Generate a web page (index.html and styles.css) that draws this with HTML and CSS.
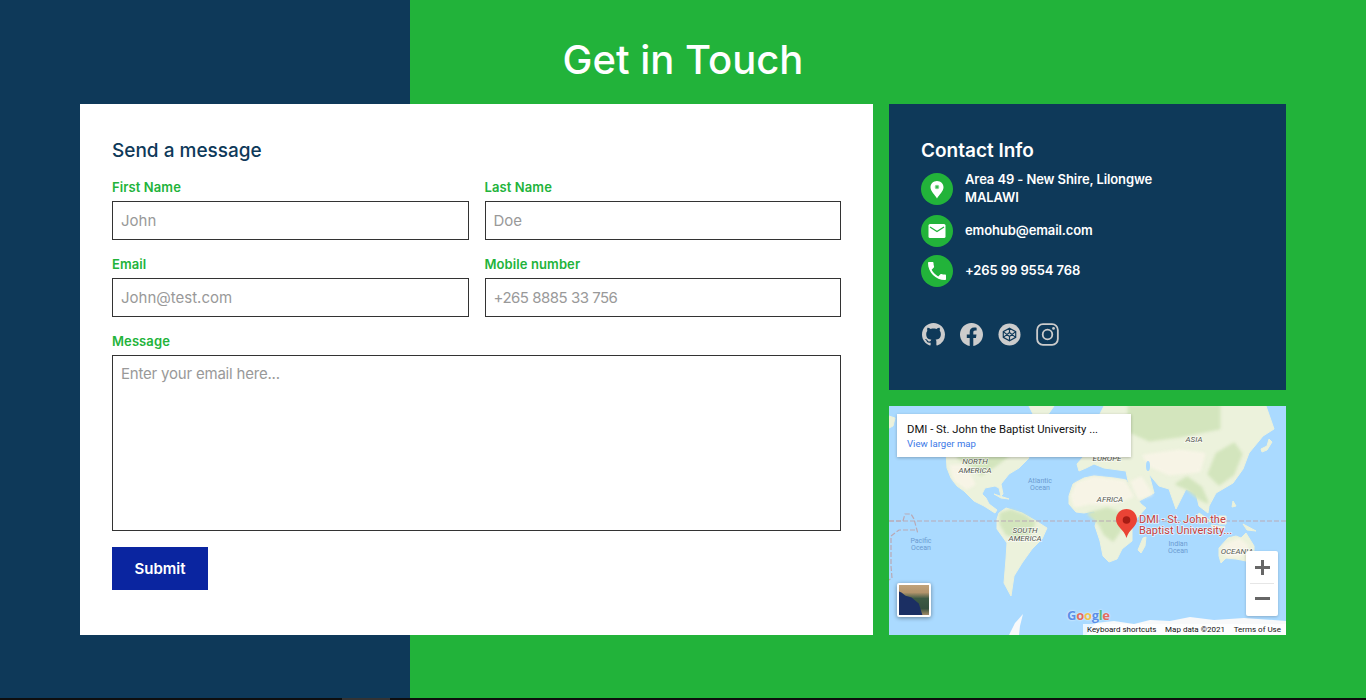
FILE: index.html
```html
<!DOCTYPE html>
<html lang="en">
<head>
    <meta charset="UTF-8">
    <meta name="viewport" content="width=device-width, initial-scale=1.0">
    <title>Get in Touch</title>
    <link rel="stylesheet" href="styles.css">
</head>
<body>
<div class="page">
    <h1 class="title">Get in Touch</h1>
    <div class="contact-grid">
        <form class="message-form">
            <h2>Send a message</h2>
            <div class="fields">
                <div class="field">
                    <label for="first">First Name</label>
                    <input type="text" id="first" placeholder="John">
                </div>
                <div class="field">
                    <label for="last">Last Name</label>
                    <input type="text" id="last" placeholder="Doe">
                </div>
                <div class="field">
                    <label for="email">Email</label>
                    <input type="text" id="email" placeholder="John@test.com">
                </div>
                <div class="field">
                    <label for="mobile">Mobile number</label>
                    <input type="text" id="mobile" class="tight" placeholder="+265 8885 33 756">
                </div>
                <div class="field wide">
                    <label for="msg">Message</label>
                    <textarea id="msg" placeholder="Enter your email here..."></textarea>
                </div>
            </div>
            <button type="button" class="submit">Submit</button>
        </form>

        <div class="side">
            <div class="info">
                <h3>Contact Info</h3>
                <div class="info-list">
                    <div class="info-item">
                        <span class="round">
                            <svg viewBox="0 0 24 24" width="24" height="24"><path fill="#fff" d="M12 4C8.300 4 5.500 6.800 5.500 10.300c0 3.900 4.300 7.500 6.500 11.200 2.200-3.700 6.500-7.300 6.500-11.200C18.500 6.800 15.700 4 12 4z"/><circle cx="12" cy="10" r="2.300" fill="#7fd48d"/><circle cx="12" cy="10" r="1" fill="#22b33a"/></svg>
                        </span>
                        <p>Area 49 - New Shire, Lilongwe<br>MALAWI</p>
                    </div>
                    <div class="info-item">
                        <span class="round">
                            <svg viewBox="0 0 24 24" width="24" height="24"><rect x="3.500" y="5" width="17" height="14" rx="1.500" fill="#fff"/><path d="M5 8l7 4.500L19 8" fill="none" stroke="#22b33a" stroke-width="1.300"/></svg>
                        </span>
                        <p>emohub@email.com</p>
                    </div>
                    <div class="info-item">
                        <span class="round">
                            <svg viewBox="0 0 24 24" width="24" height="24"><path fill="#fff" d="M6.620 10.790c1.440 2.830 3.760 5.140 6.590 6.590l2.200-2.200c.27-.27.67-.36 1.020-.24 1.120.37 2.330.57 3.570.57.55 0 1 .45 1 1V20c0 .55-.45 1-1 1-9.390 0-17-7.610-17-17 0-.55.45-1 1-1h3.500c.55 0 1 .45 1 1 0 1.250.2 2.450.57 3.570.11.35.03.74-.25 1.020l-2.200 2.200z"/></svg>
                        </span>
                        <p>+265 99 9554 768</p>
                    </div>
                </div>
                <div class="socials">
                    <svg viewBox="0 0 16 16" width="23" height="23"><path fill="#ccc" d="M8 0C3.580 0 0 3.580 0 8c0 3.540 2.290 6.530 5.470 7.590.4.07.55-.17.55-.38 0-.19-.01-.82-.01-1.490-2.010.37-2.530-.49-2.690-.94-.09-.23-.48-.94-.82-1.130-.28-.15-.68-.52-.01-.53.63-.01 1.080.58 1.230.82.72 1.210 1.870.87 2.330.66.07-.52.28-.87.51-1.070-1.780-.2-3.640-.89-3.640-3.950 0-.87.31-1.590.82-2.150-.08-.2-.36-1.020.08-2.120 0 0 .67-.21 2.200.82.64-.18 1.320-.27 2-.27.68 0 1.360.09 2 .27 1.530-1.040 2.200-.82 2.200-.82.44 1.100.16 1.920.08 2.120.51.56.82 1.270.82 2.150 0 3.070-1.870 3.750-3.650 3.950.29.25.54.73.54 1.480 0 1.070-.01 1.930-.01 2.200 0 .21.15.46.55.38A8.013 8.013 0 0 0 16 8c0-4.420-3.580-8-8-8z"/></svg>
                    <svg viewBox="0 0 16 16" width="23" height="23"><path fill="#ccc" d="M16 8.049c0-4.446-3.582-8.050-8-8.050C3.580 0-.002 3.603-.002 8.050c0 4.017 2.926 7.347 6.750 7.951v-5.625h-2.030V8.050H6.750V6.275c0-2.017 1.195-3.131 3.022-3.131.876 0 1.791.157 1.791.157v1.980h-1.009c-.993 0-1.303.621-1.303 1.258v1.510h2.218l-.354 2.326H9.250V16c3.824-.604 6.750-3.934 6.750-7.951z"/></svg>
                    <svg viewBox="0 0 24 24" width="23" height="23"><circle cx="12" cy="12" r="11.500" fill="#ccc"/><path d="M12 5.500l6.500 3.500v6L12 18.500 5.500 15V9zM12 5.500v4.500M12 18.500V14M5.500 9l6.500 5 6.500-5M5.500 15l6.500-5 6.500 5" fill="none" stroke="#0e3959" stroke-width="1.200"/></svg>
                    <svg viewBox="0 0 24 24" width="23" height="23"><rect x="1.200" y="1.200" width="21.600" height="21.600" rx="6" fill="none" stroke="#ccc" stroke-width="1.900"/><circle cx="12" cy="12" r="5" fill="none" stroke="#ccc" stroke-width="1.900"/><circle cx="18.300" cy="5.700" r="1.400" fill="#ccc"/></svg>
                </div>
            </div>

            <div class="map">
                <svg class="map-art" viewBox="0 0 397 229" width="397" height="229">
                    <g class="land">
                        <path d="M57 45L58 62 62 72 68 80 75 85 85 95 95 100 106 107 108 104 100 98 97 92 93 88 96 82 106 80 110 82 112 90 114 88 112 78 120 68 130 62 140 52 135 40 110 30 60 30z"/>
                        <path d="M110 107L117 102 133 107 147 115 158 122 153 133 143 143 133 157 125 170 122 190 115 177 117 153 118 137 108 123 108 113z"/>
                        <path d="M180 90L184 78 195 72 205 70 225 72 237 74 245 88 252 98 257 102 248 112 243 122 243 135 233 143 228 153 220 156 214 150 211 135 206 120 209 110 205 105 195 107 187 106 180 98z"/>
                        <path d="M215 0L377 0 385 23 374 30 360 47 354 63 344 77 327 87 320 100 319 107 310 100 307 87 297 83 287 103 280 83 270 80 260 68 265 87 250 95 240 80 237 65 215 62 205 58 197 62 190 65 188 58 195 50 195 30 210 10z"/>
                        <path d="M330 142L339 132 347 130 352 132 357 127 365 140 365 148 357 155 347 153 337 152 332 157 330 150z"/>
                        <path d="M254 132L257 131 256 140 252 147 249 144z"/>
                        <path d="M310 107L322 115 318 116 309 110zM330 110L337 110 337 118 330 118zM354 118L367 125 358 124zM322 119L336 121 324 122zM344 95L347 100 343 101z"/>
                        <path d="M380 33L383 36 378 44 373 46 372 43 378 40zM140 0L165 0 158 10 146 12zM105 88L120 93 112 92zM0 10L6 12 4 20 0 22z"/>
                    </g>
                    <g class="desert">
                        <path d="M183 90L188 78 205 72 235 76 243 90 225 97 200 97 186 100z"/>
                        <path d="M243 76L252 72 262 88 250 92z"/>
                        <path d="M255 50L290 45 315 48 310 65 280 68 262 60z"/>
                        <path d="M335 140L350 134 358 140 352 150 338 150z"/>
                        <path d="M62 60L75 60 85 78 78 82 66 74z"/>
                    </g>
                    <g class="forest">
                        <path d="M240 0H330L330 22 290 30 260 34 240 25z"/>
                        <path d="M112 108L122 105 135 110 145 117 140 128 128 130 118 128 112 118z"/>
                        <path d="M200 108L218 103 232 108 231 124 224 134 216 128 211 118z"/>
                        <path d="M62 30H125L118 50 105 60 92 68 85 60 70 52z"/>
                        <path d="M288 78L298 72 312 82 318 96 310 92 298 82zM328 48L345 38 352 48 344 68 330 78 320 68z"/>
                    </g>
                    <ellipse class="inland" cx="259" cy="60" rx="2" ry="5"/>
                    <g class="ice">
                        <path d="M120 229L126 217 134 208 131 220 130 229zM197 229L207 217 225 215 245 218 261 214 281 215 301 211 325 214 355 212 397 215V229z"/>
                    </g>
                    <path class="border-line" d="M0 115H397"/>
                    <path class="border-line" d="M0 115H14L16 108 22 108 25 113 29 128M26 124H10L2 130 2 160 3 172 0 174"/>
                    <g class="place">
                        <text x="86" y="58" text-anchor="middle">NORTH</text>
                        <text x="86" y="67" text-anchor="middle">AMERICA</text>
                        <text x="136" y="127" text-anchor="middle">SOUTH</text>
                        <text x="136" y="135" text-anchor="middle">AMERICA</text>
                        <text x="221" y="96" text-anchor="middle">AFRICA</text>
                        <text x="305" y="36" text-anchor="middle">ASIA</text>
                        <text x="218" y="55" text-anchor="middle">EUROPE</text>
                        <text x="348" y="148" text-anchor="middle">OCEANIA</text>
                    </g>
                    <g class="ocean">
                        <text x="151" y="77" text-anchor="middle">Atlantic</text>
                        <text x="151" y="84" text-anchor="middle">Ocean</text>
                        <text x="32" y="137" text-anchor="middle">Pacific</text>
                        <text x="32" y="144" text-anchor="middle">Ocean</text>
                        <text x="289" y="140" text-anchor="middle">Indian</text>
                        <text x="289" y="147" text-anchor="middle">Ocean</text>
                    </g>
                    <path fill="#ea4335" d="M237.500 103c-5.900 0-10.500 4.700-10.500 10.500 0 7.500 8 9.500 10.500 18.500 2.500-9 10.500-11 10.500-18.500 0-5.800-4.600-10.500-10.500-10.500z"/>
                    <circle cx="237.500" cy="114" r="3.800" fill="#a61c14"/>
                    <text class="pin-label" x="250" y="117">DMI - St. John the</text>
                    <text class="pin-label" x="250" y="128">Baptist University...</text>
                </svg>

                <div class="map-card">
                    <p class="map-name">DMI - St. John the Baptist University ...</p>
                    <a class="map-link" href="#">View larger map</a>
                </div>
                <div class="map-thumb"><span class="thumb-land"></span></div>
                <div class="map-zoom">
                    <span class="zoom-btn plus"></span>
                    <span class="zoom-btn minus"></span>
                </div>
                <div class="google"><span class="g-b">G</span><span class="g-r">o</span><span class="g-y">o</span><span class="g-b">g</span><span class="g-g">l</span><span class="g-r">e</span></div>
                <div class="map-foot">
                    <span>Keyboard shortcuts</span>
                    <span>Map data ©2021</span>
                    <span>Terms of Use</span>
                </div>
            </div>
        </div>
    </div>
</div>
<div class="bottom-strip"><span class="strip-tab"></span></div>
</body>
</html>
```

FILE: styles.css
```css
* {
    box-sizing: border-box;
}
body {
    margin: 0;
    font-family: "Inter", "Liberation Sans", sans-serif;
    background-color: #0e0e0e;
}
.page {
    height: 698px;
    padding: 0 80px;
    background: linear-gradient(90deg, #0e3959 410px, #22b33a 410px);
}
.title {
    margin: 0;
    height: 104px;
    padding-top: 15px;
    display: flex;
    align-items: center;
    justify-content: center;
    color: #fff;
    font-size: 40px;
    font-weight: 500;
}
.contact-grid {
    display: grid;
    grid-template-columns: 2fr 1fr;
    gap: 16px;
}

/* form */
.message-form {
    background-color: #fff;
    padding: 32px;
}
.message-form h2 {
    margin: 0 0 13px;
    padding-top: 1px;
    font-size: 19px;
    line-height: 27px;
    font-weight: 500;
    color: #0e3959;
}
.fields {
    display: grid;
    grid-template-columns: 1fr 1fr;
    gap: 14px 16px;
}
.field {
    display: flex;
    flex-direction: column;
    gap: 4px;
}
.wide {
    grid-column: 1 / 3;
}
.field label {
    font-size: 13px;
    line-height: 20px;
    font-weight: 600;
    letter-spacing: 0.1px;
    color: #22b33a;
}
.field input,
.field textarea {
    display: block;
    width: 100%;
    padding: 8px;
    border: 1px solid #333;
    border-radius: 0;
    font-family: inherit;
    font-size: 15px;
    outline: none;
    resize: none;
}
.field input {
    height: 39px;
}
.field input.tight {
    letter-spacing: -0.5px;
}
.field textarea {
    height: 176px;
    letter-spacing: -0.2px;
}
.field input::placeholder,
.field textarea::placeholder {
    color: #999;
}
.submit {
    display: block;
    width: 96px;
    height: 43px;
    margin-top: 16px;
    border: none;
    background-color: #0a25a0;
    color: #fff;
    font-family: inherit;
    font-size: 15px;
    font-weight: 600;
}

/* right column */
.side {
    display: flex;
    flex-direction: column;
    gap: 16px;
}
.info {
    height: 286px;
    padding: 32px;
    background-color: #0e3959;
    color: #fff;
}
.info h3 {
    margin: 0 0 6px;
    padding-top: 1px;
    font-size: 19px;
    line-height: 27px;
    font-weight: 600;
}
.info-list {
    display: flex;
    flex-direction: column;
    gap: 7px;
}
.info-item {
    display: flex;
    align-items: center;
    gap: 12px;
    font-size: 13px;
    font-weight: 600;
    line-height: 18px;
    letter-spacing: -0.1px;
}
.info-item p {
    margin: 0;
    padding-bottom: 1px;
}
.round {
    width: 32px;
    height: 32px;
    margin-top: 1px;
    flex-shrink: 0;
    display: flex;
    align-items: center;
    justify-content: center;
    border-radius: 50%;
    background-color: #22b33a;
}
.socials {
    display: flex;
    gap: 15px;
    margin-top: 36px;
    padding-left: 1px;
}

/* map */
.map {
    position: relative;
    height: 229px;
    overflow: hidden;
    background-color: #aadaff;
    font-family: "Roboto", sans-serif;
}
.map-art {
    display: block;
}
.land path {
    fill: #ecf2dc;
    stroke: #ecf2dc;
    stroke-width: 1;
    stroke-linejoin: round;
}
.desert path {
    fill: #f7f4e6;
    stroke: #f7f4e6;
    stroke-width: 3;
    stroke-linejoin: round;
    filter: blur(1.500px);
}
.forest path {
    fill: #d3e5bd;
    stroke: #d3e5bd;
    stroke-width: 3;
    stroke-linejoin: round;
    filter: blur(1.500px);
}
.inland {
    fill: #aadaff;
}
.ice path {
    fill: #f8f9fa;
}
.border-line {
    fill: none;
    stroke: #b9a9b5;
    stroke-width: 1.200;
    stroke-dasharray: 5 2;
}
.place text {
    font-size: 8px;
    font-style: italic;
    fill: #55584f;
    stroke: rgba(255,255,255,0.7);
    stroke-width: 1.500px;
    paint-order: stroke;
}
.ocean text {
    font-size: 7px;
    fill: #6a9bd1;
}
.pin-label {
    font-size: 11px;
    fill: #c5403c;
    stroke: rgba(255,255,255,0.7);
    stroke-width: 1.500px;
    paint-order: stroke;
}
.map-card {
    position: absolute;
    left: 8px;
    top: 8px;
    width: 234px;
    height: 43px;
    padding: 9px 10px;
    background-color: #fff;
    box-shadow: 0 1px 3px rgba(0,0,0,0.25);
}
.map-name {
    margin: 0;
    font-size: 11.300px;
    line-height: 14px;
    color: #111;
}
.map-link {
    display: block;
    font-size: 9.600px;
    line-height: 13px;
    color: #3b78e7;
    text-decoration: none;
}
.map-thumb {
    position: absolute;
    left: 8px;
    top: 177px;
    width: 34px;
    height: 34px;
    border: 2px solid #fff;
    border-radius: 2px;
    overflow: hidden;
    background-color: #1b2f63;
    box-shadow: 0 1px 4px rgba(0,0,0,0.4);
}
.thumb-land {
    position: absolute;
    left: 0;
    top: 0;
    width: 30px;
    height: 30px;
    background: linear-gradient(180deg, #c0a27a 0, #b3946c 25%, #3d5a44 45%, #35503e 78%, #a08a68 100%);
    clip-path: polygon(0 0, 100% 0, 100% 100%, 78% 100%, 66% 62%, 42% 42%, 22% 36%, 8% 25%, 0 22%);
}
.map-zoom {
    position: absolute;
    left: 357px;
    top: 145px;
    width: 32px;
    height: 65px;
    display: flex;
    flex-direction: column;
    background-color: #fff;
    border-radius: 2px;
    box-shadow: 0 1px 3px rgba(0,0,0,0.2);
}
.zoom-btn {
    position: relative;
    flex: 1;
}
.plus {
    border-bottom: 1px solid #e6e6e6;
    margin: 0 4px;
}
.plus::before,
.minus::before,
.plus::after {
    content: "";
    position: absolute;
    left: 50%;
    top: 50%;
    width: 15px;
    height: 3px;
    margin: -1.500px 0 0 -7.500px;
    background-color: #666;
}
.minus::before {
    margin-top: -3px;
}
.plus::after {
    width: 3px;
    height: 15px;
    margin: -7.500px 0 0 -1.500px;
}
.google {
    position: absolute;
    left: 178px;
    top: 202px;
    font-family: "Open Sans", sans-serif;
    font-size: 13px;
    line-height: 14px;
    font-weight: 700;
    letter-spacing: -0.3px;
    text-shadow: 0 0 2px #fff;
}
.g-b { color: #5b8fe8; }
.g-r { color: #e26a5e; }
.g-y { color: #eec14e; }
.g-g { color: #5bb974; }
.map-foot {
    position: absolute;
    left: 194px;
    right: 0;
    bottom: 0;
    height: 11px;
    padding: 0 5px 0 4px;
    display: flex;
    justify-content: space-between;
    align-items: center;
    background-color: rgba(255,255,255,0.75);
    font-size: 8px;
    color: #111;
    white-space: nowrap;
}

.bottom-strip {
    display: flex;
    height: 2px;
}
.strip-tab {
    width: 48px;
    margin-left: 342px;
    background-color: #333;
}
```
